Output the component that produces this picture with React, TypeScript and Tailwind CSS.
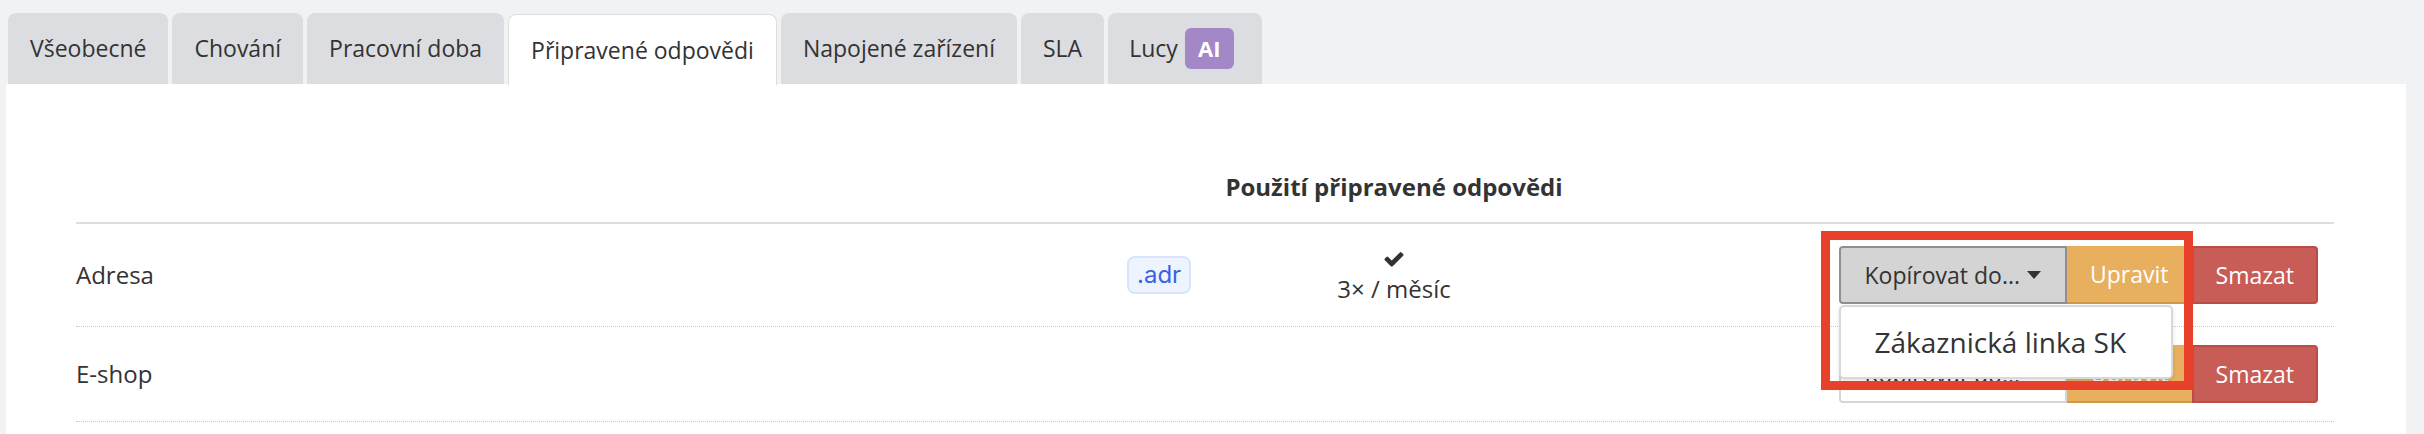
import type { ReactNode } from "react"

const tabs = ["Všeobecné", "Chování", "Pracovní doba", "Připravené odpovědi", "Napojené zařízení", "SLA"]
const ACTIVE = "Připravené odpovědi"

function Check() {
  return (
    <svg viewBox="0 0 1792 1792" className="h-[22px] w-[22px] fill-[#333]">
      <path d="M1671 566q0 40-28 68l-724 724-136 136q-28 28-68 28t-68-28l-136-136-362-362q-28-28-28-68t28-68l136-136q28-28 68-28t68 28l294 295 656-657q28-28 68-28t68 28l136 136q28 28 28 68z" />
    </svg>
  )
}

function Caret() {
  return <span className="ml-[7px] inline-block h-0 w-0 border-x-[7px] border-t-[8px] border-x-transparent border-t-[#333]" />
}

function Actions({ open }: { open?: boolean }) {
  return (
    <div className="relative flex h-[58px] text-[23px]">
      <button
        type="button"
        className={
          open
            ? "flex items-center rounded-l-[4px] border-2 border-[#8f8f8f] bg-[#d4d4d4] px-[24px] text-[#333]"
            : "flex items-center rounded-l-[4px] border-2 border-[#d6d6d6] bg-white px-[24px] text-[#333]"
        }
      >
        Kopírovat do...
        <Caret />
      </button>
      <button type="button" className="border-b-2 border-[#cf9748] bg-[#e8b05e] px-[23px] text-white">
        Upravit
      </button>
      <button type="button" className="rounded-r-[4px] border-2 border-[#bb4c46] bg-[#c85c56] px-[22px] text-white">
        Smazat
      </button>

      {open && (
        <>
          <div className="absolute left-0 top-[59px] z-10 flex h-[74px] w-[334px] items-center rounded-[5px] border-2 border-[#d9d9d9] bg-white pl-[34px] text-[28px] text-[#333] shadow-[0_2px_4px_rgba(0,0,0,0.12)]">
            Zákaznická linka SK
          </div>
          <div className="pointer-events-none absolute left-[-18px] top-[-15px] z-20 h-[159px] w-[372px] border-[9px] border-[#e8402a]" />
        </>
      )}
    </div>
  )
}

function Row({ name, children, open, tall }: { name: string; children?: ReactNode; open?: boolean; tall?: boolean }) {
  return (
    <div
      className={
        (tall ? "h-[103px] " : "h-[95px] ") +
        "grid grid-cols-[1040px_88px_380px_1fr] items-center border-b border-dotted border-[#c8c8c8]"
      }
    >
      <div className="text-[24px]">{name}</div>
      {children ?? <div />}
      {!children && <div />}
      <div className="flex justify-end pr-[16px]">
        <Actions open={open} />
      </div>
    </div>
  )
}

export default function App() {
  return (
    <div className="min-h-screen bg-[#f1f2f4] font-['Open_Sans',sans-serif] text-[#333]">
      <div className="flex h-[84px] items-end gap-[4px] pl-[8px]">
        {tabs.map((t) =>
          t === ACTIVE ? (
            <div
              key={t}
              className="relative top-[1px] flex h-[71px] items-center rounded-t-[8px] border border-b-0 border-[#dedede] bg-white px-[22px] text-[23px]"
            >
              {t}
            </div>
          ) : (
            <div key={t} className="flex h-[71px] items-center rounded-t-[8px] bg-[#dcdde1] px-[22px] text-[23px]">
              {t}
            </div>
          )
        )}
        <div className="flex h-[71px] items-center gap-[7px] rounded-t-[8px] bg-[#dcdde1] pl-[21px] pr-[28px] text-[23px]">
          Lucy
          <span className="flex h-[41px] w-[49px] items-center justify-center rounded-[6px] bg-[#a387c7] text-[22px] font-bold text-white">
            AI
          </span>
        </div>
      </div>

      <div className="ml-[6px] mr-[18px] bg-white pb-[40px] pl-[70px] pr-[72px] pt-[74px]">
        <div className="grid h-[66px] grid-cols-[1040px_88px_380px_1fr] items-end border-b-2 border-[#dddddd] pb-[17px]">
          <div />
          <div />
          <div className="text-center text-[24px] font-bold">Použití připravené odpovědi</div>
          <div />
        </div>

        <Row name="Adresa" open tall>
          <div className="pl-[11px]">
            <span className="inline-flex h-[38px] items-center rounded-[8px] border-2 border-[#d8e4fb] bg-[#eef4ff] px-[8px] font-['Inter',sans-serif] text-[24px] text-[#3a62e3]">
              .adr
            </span>
          </div>
          <div className="flex flex-col items-center gap-[4px] pt-[2px]">
            <Check />
            <div className="text-[24px] leading-[30px]">3× / měsíc</div>
          </div>
        </Row>
        <Row name="E-shop" />
      </div>
    </div>
  )
}
